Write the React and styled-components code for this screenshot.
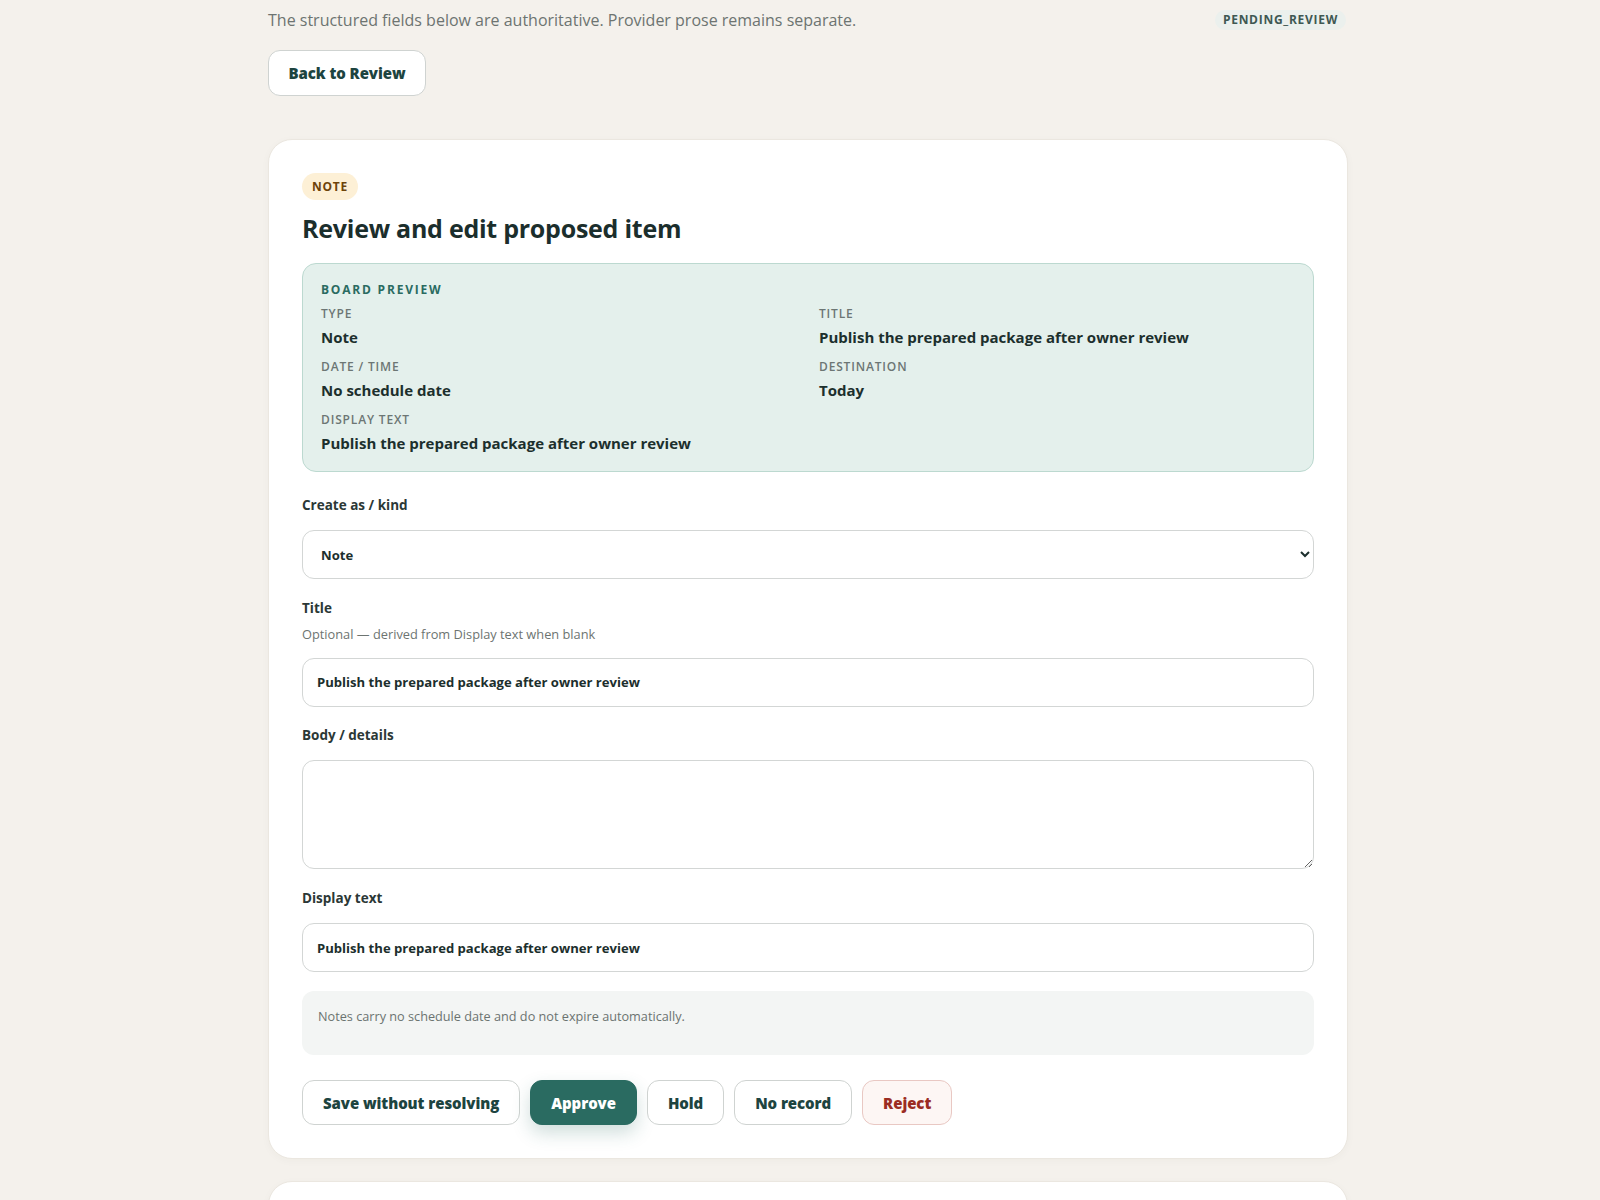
import React, { useState } from 'react';
import styled, { createGlobalStyle } from 'styled-components';

const GlobalStyle = createGlobalStyle`
  * { box-sizing: border-box; }
  body {
    margin: 0;
    background: #f4f1ec;
    font-family: "Open Sans", "Noto Sans", sans-serif;
    color: #1c2f2d;
  }
`;

const Page = styled.div`
  min-height: 100vh;
  padding: 8px 0 40px;
`;

const Wrap = styled.div`
  width: 1080px;
  margin-left: 268px;
  display: flex;
  flex-direction: column;
  align-items: flex-start;
`;

const TopRow = styled.div`
  width: 100%;
  display: flex;
  justify-content: space-between;
  align-items: center;
`;

const Lede = styled.p`
  margin: 0;
  font-size: 16px;
  line-height: 24px;
  color: #6d7471;
`;

const StatusPill = styled.span`
  margin-right: 2px;
  padding: 2px 8px;
  border-radius: 999px;
  background: #ebf0ed;
  color: #3e5853;
  font-size: 12px;
  font-weight: 700;
  letter-spacing: 0.06em;
  line-height: 16px;
`;

const Button = styled.button`
  height: ${(p) => (p.$tall ? 46 : 45)}px;
  padding: 0 ${(p) => (p.$tall ? 19.5 : 20)}px;
  border-radius: 12px;
  border: 1px solid ${(p) => (p.$variant === 'primary' ? '#2a6b61' : p.$variant === 'danger' ? '#e9c8c3' : '#cfd3d1')};
  background: ${(p) => (p.$variant === 'primary' ? '#2a6b61' : p.$variant === 'danger' ? '#fdf6f4' : '#fff')};
  color: ${(p) => (p.$variant === 'primary' ? '#fff' : p.$variant === 'danger' ? '#9b2c22' : '#1d4440')};
  box-shadow: ${(p) => (p.$variant === 'primary' ? '0 8px 18px rgba(42, 107, 97, 0.22)' : 'none')};
  font-family: "Open Sans", sans-serif;
  font-size: 15px;
  font-weight: 800;
  letter-spacing: -0.005em;
  cursor: pointer;
`;

const BackButton = styled(Button)`
  margin-top: 18px;
`;

const Card = styled.section`
  width: 100%;
  margin-top: ${(p) => (p.$first ? 43 : 22)}px;
  min-height: ${(p) => p.$minHeight || 0}px;
  padding: 33px;
  background: #fff;
  border: 1px solid #ebe7e0;
  border-radius: 24px;
  box-shadow: 0 2px 8px rgba(60, 50, 30, 0.03);
  display: flex;
  flex-direction: column;
  align-items: flex-start;
`;

const KindPill = styled.span`
  height: 27px;
  display: inline-flex;
  align-items: center;
  padding: 0 10px;
  border-radius: 999px;
  background: #fdf0d6;
  color: #6e4309;
  font-size: 12px;
  font-weight: 700;
  letter-spacing: 0.06em;
`;

const Heading = styled.h2`
  margin: 11px 0 18px;
  font-size: 25px;
  line-height: 34px;
  font-weight: 700;
  color: #1b2e2c;
  letter-spacing: -0.01em;
`;

const Preview = styled.div`
  width: 100%;
  padding: 18px 18px 17px;
  background: #e4f0ec;
  border: 1px solid #bcd9d0;
  border-radius: 14px;
`;

const PreviewTitle = styled.div`
  font-size: 12px;
  line-height: 16px;
  font-weight: 700;
  letter-spacing: 0.15em;
  color: #2a6b61;
`;

const PreviewGrid = styled.dl`
  margin: 8px 0 0;
  display: grid;
  grid-template-columns: 1fr 1fr;
  column-gap: 22px;
  row-gap: 11px;
`;

const PreviewItem = styled.div``;

const PreviewLabel = styled.dt`
  font-size: 12px;
  line-height: 16px;
  font-weight: 600;
  letter-spacing: 0.07em;
  color: #6c7674;
  text-transform: uppercase;
`;

const PreviewValue = styled.dd`
  margin: 4px 0 0;
  font-size: 15px;
  line-height: 22px;
  font-weight: 700;
  color: #1c2f2d;
`;

const Form = styled.div`
  width: 100%;
  margin-top: 23px;
  display: flex;
  flex-direction: column;
  gap: 18.7px;
`;

const Field = styled.label`
  display: flex;
  flex-direction: column;
`;

const FieldHead = styled.div`
  display: flex;
  flex-direction: column;
  gap: 7px;
  margin-bottom: 15px;
`;

const FieldLabel = styled.span`
  font-size: 13.5px;
  line-height: 20px;
  font-weight: 700;
  color: #2b3836;
`;

const Hint = styled.span`
  font-size: 12.8px;
  line-height: 18px;
  color: #6d7471;
`;

const controlBase = `
  width: 100%;
  border: 1px solid #d3d6d5;
  border-radius: 12px;
  background: #fff;
  color: #1c2f2d;
  font-family: "Open Sans", sans-serif;
  font-size: 13.1px;
  font-weight: 700;
  outline: none;
`;

const Select = styled.select`
  ${controlBase}
  height: 49px;
  padding: 0 10px 0 14px;
`;

const Input = styled.input`
  ${controlBase}
  height: 49px;
  padding: 0 14px;
`;

const TextArea = styled.textarea`
  ${controlBase}
  height: 109px;
  padding: 14px;
  resize: vertical;
`;

const InfoBox = styled.div`
  min-height: 64px;
  padding: 16px;
  border-radius: 12px;
  background: #f3f5f4;
  font-size: 12.7px;
  line-height: 18px;
  color: #6b7370;
`;

const Actions = styled.div`
  margin-top: 7px;
  display: flex;
  gap: 10px;
`;

const preview = [
  ['Type', 'Note'],
  ['Title', 'Publish the prepared package after owner review'],
  ['Date / time', 'No schedule date'],
  ['Destination', 'Today'],
  ['Display text', 'Publish the prepared package after owner review'],
];

export default function App() {
  const [kind, setKind] = useState('note');
  const [title, setTitle] = useState('Publish the prepared package after owner review');
  const [body, setBody] = useState('');
  const [display, setDisplay] = useState('Publish the prepared package after owner review');

  return (
    <>
      <GlobalStyle />
      <Page>
        <Wrap>
          <TopRow>
            <Lede>The structured fields below are authoritative. Provider prose remains separate.</Lede>
            <StatusPill>PENDING_REVIEW</StatusPill>
          </TopRow>
          <BackButton $tall>Back to Review</BackButton>

          <Card $first>
            <KindPill>NOTE</KindPill>
            <Heading>Review and edit proposed item</Heading>

            <Preview>
              <PreviewTitle>BOARD PREVIEW</PreviewTitle>
              <PreviewGrid>
                {preview.map(([label, value]) => (
                  <PreviewItem key={label}>
                    <PreviewLabel>{label}</PreviewLabel>
                    <PreviewValue>{value}</PreviewValue>
                  </PreviewItem>
                ))}
              </PreviewGrid>
            </Preview>

            <Form>
              <Field>
                <FieldHead>
                  <FieldLabel>Create as / kind</FieldLabel>
                </FieldHead>
                <Select value={kind} onChange={(e) => setKind(e.target.value)}>
                  <option value="note">Note</option>
                  <option value="task">Task</option>
                  <option value="event">Event</option>
                </Select>
              </Field>

              <Field>
                <FieldHead>
                  <FieldLabel>Title</FieldLabel>
                  <Hint>Optional — derived from Display text when blank</Hint>
                </FieldHead>
                <Input value={title} onChange={(e) => setTitle(e.target.value)} />
              </Field>

              <Field>
                <FieldHead>
                  <FieldLabel>Body / details</FieldLabel>
                </FieldHead>
                <TextArea value={body} onChange={(e) => setBody(e.target.value)} />
              </Field>

              <Field>
                <FieldHead>
                  <FieldLabel>Display text</FieldLabel>
                </FieldHead>
                <Input value={display} onChange={(e) => setDisplay(e.target.value)} />
              </Field>

              <InfoBox>Notes carry no schedule date and do not expire automatically.</InfoBox>

              <Actions>
                <Button>Save without resolving</Button>
                <Button $variant="primary">Approve</Button>
                <Button>Hold</Button>
                <Button>No record</Button>
                <Button $variant="danger">Reject</Button>
              </Actions>
            </Form>
          </Card>

          <Card $minHeight={220} />
        </Wrap>
      </Page>
    </>
  );
}
